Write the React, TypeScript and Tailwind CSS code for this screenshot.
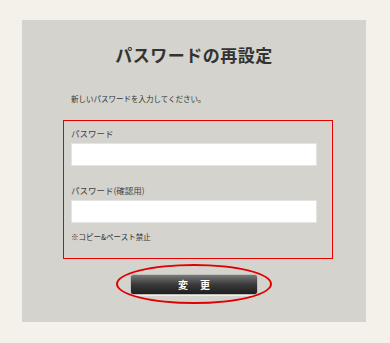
const jp = { fontFamily: '"Noto Sans CJK JP", "Noto Sans", sans-serif' };

export default function App() {
  return (
    <div className="w-[390px] h-[343px] bg-[#f3f1ea] pt-[20px] pl-[22px]" style={jp}>
      <div className="w-[344px] h-[302px] bg-[#d4d3ce] flex flex-col items-center">
        <h1 className="mt-[24px] text-[17px] leading-[22px] font-bold text-[#333] tracking-[0.5px]">
          パスワードの再設定
        </h1>

        <p className="self-start ml-[49px] mt-[28px] text-[7.5px] leading-[10px] text-[#333]">
          新しいパスワードを入力してください。
        </p>

        <div className="self-start ml-[41px] mt-[16px] w-[270px] h-[139px] border border-solid border-[#e60000] px-[7px] pt-[6px]">
          <label className="block text-[8.5px] leading-[12px] text-[#444]">パスワード</label>
          <input
            type="password"
            className="mt-[4px] block w-[246px] h-[23px] bg-white border border-[#e4e4e2] outline-none"
          />
          <label className="block mt-[18px] text-[8.5px] leading-[12px] text-[#444]">パスワード(確認用)</label>
          <input
            type="password"
            className="mt-[4px] block w-[246px] h-[23px] bg-white border border-[#e4e4e2] outline-none"
          />
          <p className="mt-[9px] text-[7.5px] leading-[10px] text-[#333]">※コピー&amp;ペースト禁止</p>
        </div>

        <div className="relative mt-[15px]">
          <button className="block w-[128px] h-[21px] rounded-[3px] border border-[#bfbfbb] bg-gradient-to-b from-[#7a7a7a] via-[#3a3a3a] to-[#1e1e1e] text-white text-[10px] font-bold tracking-[12px] pl-[12px] shadow-[0_1px_0_#eee]">
            変更
          </button>
          <div className="absolute left-[-14px] top-[-10px] w-[156px] h-[40px] rounded-[50%] border-2 border-[#e00000] pointer-events-none" />
        </div>
      </div>
    </div>
  );
}
